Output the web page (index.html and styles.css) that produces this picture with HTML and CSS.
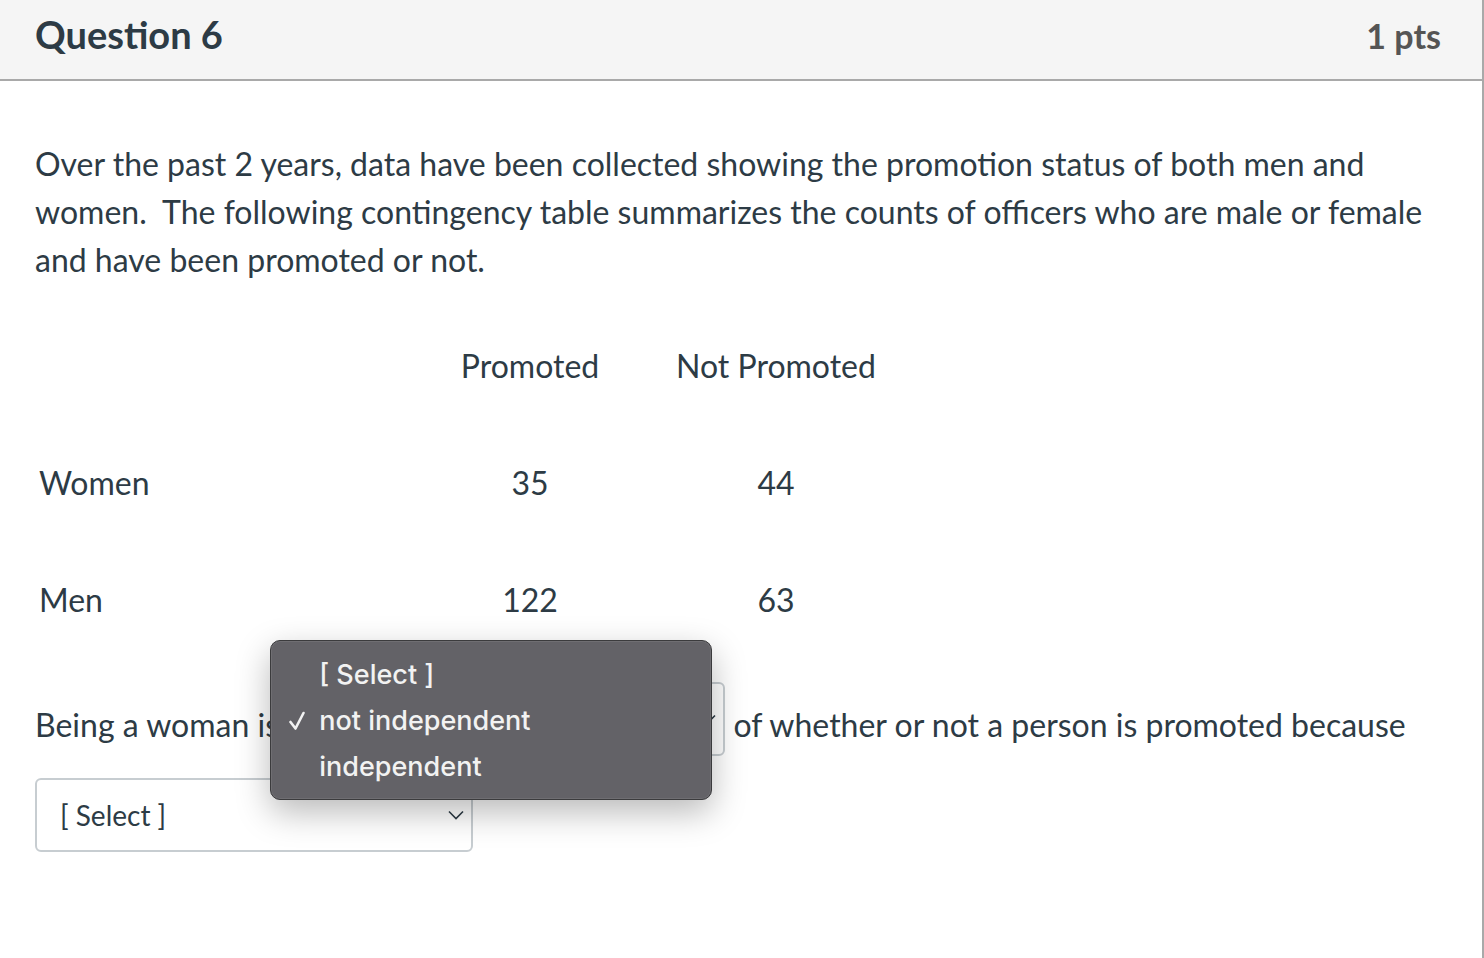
FILE: index.html
```html
<!DOCTYPE html>
<html lang="en">
<head>
<meta charset="utf-8">
<title>Question 6</title>
<link rel="stylesheet" href="styles.css">
</head>
<body>
<div class="question">
  <div class="q-header">
    <h2 class="q-title">Question 6</h2>
    <span class="q-points">1 pts</span>
  </div>
  <div class="q-body">
    <p class="q-text">Over the past 2 years, data have been collected showing the promotion status of both men and women.&nbsp; The following contingency table summarizes the counts of officers who are male or female and have been promoted or not.</p>
    <div class="ctable">
      <div class="cell label"></div>
      <div class="cell num">Promoted</div>
      <div class="cell num">Not Promoted</div>
      <div class="cell label">Women</div>
      <div class="cell num">35</div>
      <div class="cell num">44</div>
      <div class="cell label">Men</div>
      <div class="cell num">122</div>
      <div class="cell num">63</div>
    </div>
    <p class="answer">Being a woman is <span class="select select-open"><span class="select-text">not independent</span><svg class="chev" viewBox="0 0 16 10" width="16" height="10"><path d="M1 1.5 L8 8.5 L15 1.5" fill="none" stroke="#2d3b45" stroke-width="1.6"/></svg><span class="menu">
          <span class="menu-item">[ Select ]</span>
          <span class="menu-item checked"><svg class="check" viewBox="0 0 16 20" width="16" height="20"><path d="M1.5 11 L6.5 17.5 L14.5 2" fill="none" stroke="#f2f2f2" stroke-width="2.6" stroke-linecap="round" stroke-linejoin="round"/></svg>not independent</span>
          <span class="menu-item">independent</span>
        </span></span> of whether or not a person is promoted because <span class="select"><span class="select-text">[ Select ]</span><svg class="chev" viewBox="0 0 16 10" width="16" height="10"><path d="M1 1.5 L8 8.5 L15 1.5" fill="none" stroke="#2d3b45" stroke-width="1.6"/></svg></span></p>
  </div>
</div>
</body>
</html>
```

FILE: styles.css
```css
html, body {
  margin: 0;
  padding: 0;
  background: #ffffff;
}

body {
  font-family: Lato, "Noto Sans", sans-serif;
  color: #2d3b45;
}

.question {
  width: 1482px;
  min-height: 958px;
  border-right: 2px solid #a9a9a9;
  background: #ffffff;
}

.q-header {
  height: 79px;
  background: #f5f5f5;
  border-bottom: 2px solid #a9a9a9;
  display: flex;
  align-items: center;
  justify-content: space-between;
  padding: 0 41px 0 35px;
}

.q-title {
  margin: 0;
  font-size: 38px;
  font-weight: 700;
  color: #2d3b45;
  line-height: 1;
  position: relative;
  top: -6px;
}

.q-points {
  font-size: 34px;
  font-weight: 700;
  color: #555555;
  line-height: 1;
  position: relative;
  top: -4px;
}

.q-body {
  padding: 0 35px;
}

.q-text {
  margin: 59px 0 0;
  font-size: 32px;
  line-height: 48px;
}

.ctable {
  margin-top: 23px;
  display: grid;
  grid-template-columns: 405px 180px 312px;
  grid-auto-rows: 117px;
  font-size: 32px;
}

.cell {
  display: flex;
  align-items: center;
}

.cell.label {
  padding-left: 4px;
}

.cell.num {
  justify-content: center;
}

.answer {
  margin: 14px 0 0;
  font-size: 32px;
  line-height: 48px;
}

.select {
  position: relative;
  display: inline-flex;
  align-items: center;
  justify-content: space-between;
  box-sizing: border-box;
  width: 438px;
  height: 74px;
  margin: 10px 0 12px;
  padding: 0 7px 0 23px;
  border: 2px solid #c7cdd1;
  border-radius: 6px;
  background: #ffffff;
  font-size: 28px;
  vertical-align: 4px;
}

.select-open {
  vertical-align: 7px;
}

.select-text {
  line-height: 1;
}

.chev {
  flex: none;
}

.menu {
  position: absolute;
  left: -19px;
  top: -44px;
  width: 442px;
  box-sizing: border-box;
  padding: 11px 0 9px;
  display: flex;
  flex-direction: column;
  background: #636267;
  border: 1px solid #3b3b3d;
  border-radius: 10px;
  box-shadow: 0 12px 34px rgba(0, 0, 0, 0.28), 0 0 0 1px rgba(255, 255, 255, 0.08) inset;
  font-family: Inter, "Noto Sans", sans-serif;
  font-size: 27px;
  font-weight: 500;
  color: #f2f2f2;
  line-height: 46px;
  z-index: 5;
}

.menu-item {
  position: relative;
  padding-left: 48px;
  white-space: nowrap;
}

.check {
  position: absolute;
  left: 18px;
  top: 13px;
}
```
